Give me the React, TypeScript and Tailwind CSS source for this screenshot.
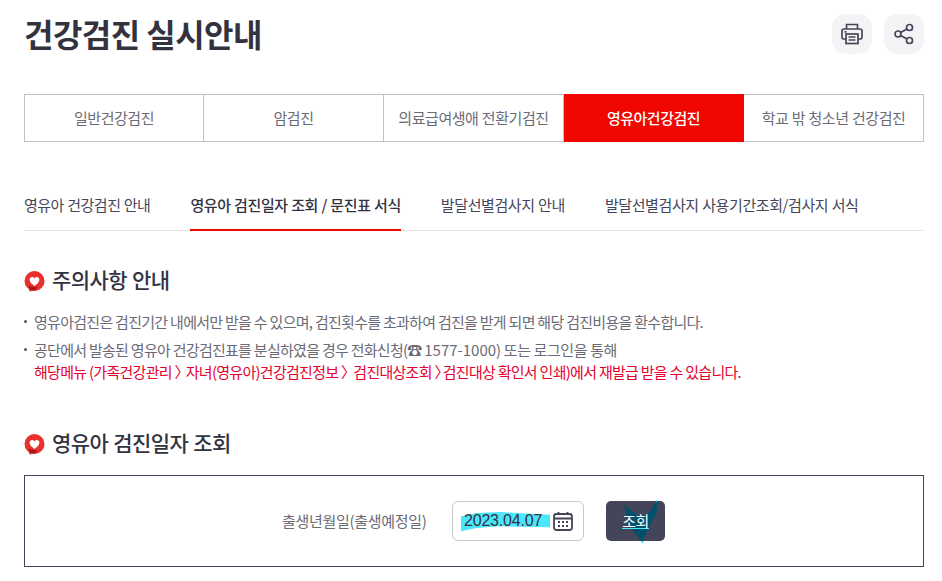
const FONT = "font-['Noto_Sans_CJK_KR','Noto_Sans',sans-serif]"

const tabs = ['일반건강검진', '암검진', '의료급여생애 전환기검진', '영유아건강검진', '학교 밖 청소년 건강검진']
const subTabs = ['영유아 건강검진 안내', '영유아 검진일자 조회 / 문진표 서식', '발달선별검사지 안내', '발달선별검사지 사용기간조회/검사지 서식']

function HeartIcon() {
  return (
    <svg width="21" height="21" viewBox="0 0 21 21" className="mt-[5px] shrink-0">
      <circle cx="10.5" cy="10" r="10" fill="#e8302c" />
      <path d="M4 14l1.500 6.500 8-1.500z" fill="#e8302c" />
      <path d="M4.500 14.500c2.500 1.200 5 1.800 8.500 1.500l-1 2.400c-2 .6-4 .7-6.200.4z" fill="#a31a1c" />
      <path d="M10.500 15C8.200 13.200 5.600 11.400 5.600 8.800 5.600 7.100 6.800 6 8.100 6c1 0 1.900.6 2.400 1.400C11 6.600 11.900 6 12.900 6c1.300 0 2.500 1.100 2.500 2.800 0 2.600-2.600 4.400-4.900 6.200z" fill="#fff" />
    </svg>
  )
}

function SectionTitle({ children }: { children: string }) {
  return (
    <div className="flex items-center gap-[7px] h-[30px]">
      <HeartIcon />
      <h2 className="text-[21px] font-medium leading-[30px] tracking-[-0.6px] [word-spacing:1px] text-[#33333f]">{children}</h2>
    </div>
  )
}

export default function App() {
  return (
    <div className={`${FONT} w-[942px] h-[581px] overflow-hidden bg-white pl-[24px] pr-[18px] tracking-[-0.5px]`}>
      <div className="flex items-start justify-between pt-[14px] h-[94px]">
        <h1 className="-mt-[2px] text-[32px] font-bold leading-[42px] tracking-[-0.55px] text-[#33333f]">건강검진 실시안내</h1>
        <div className="flex gap-[12px]">
          <button className="flex h-[40px] w-[40px] items-center justify-center rounded-[14px] bg-[#f4f4f6]">
            <svg width="24" height="24" viewBox="0 0 24 24" fill="none" stroke="#454559" strokeWidth="1.7">
              <path d="M6.500 7V2.500h11V7" />
              <path d="M6 17H3.500a1.500 1.500 0 0 1-1.500-1.500V9a2 2 0 0 1 2-2h16a2 2 0 0 1 2 2v6.500a1.500 1.500 0 0 1-1.500 1.500H18" />
              <rect x="6" y="12" width="12" height="9.500" />
              <path d="M8.500 15h7M8.500 18h7M4.500 9.800h2" />
            </svg>
          </button>
          <button className="flex h-[40px] w-[40px] items-center justify-center rounded-[14px] bg-[#f4f4f6]">
            <svg width="22" height="22" viewBox="0 0 22 22" fill="none" stroke="#454559" strokeWidth="1.700">
              <circle cx="5" cy="11" r="3" />
              <circle cx="16.500" cy="4.500" r="3" />
              <circle cx="16.500" cy="17.500" r="3" />
              <path d="M7.700 9.500l6.200-3.500M7.700 12.500l6.200 3.500" />
            </svg>
          </button>
        </div>
      </div>

      <div className="grid h-[48px] grid-cols-[179px_180px_180px_180px_179px] border border-[#c1c1c9]">
        {tabs.map((t, i) =>
          i === 3 ? (
            <div key={t} className="-my-px flex items-center justify-center bg-[#f00800] pr-[1px] text-[15px] font-medium text-white">{t}</div>
          ) : (
            <div key={t} className={`flex items-center justify-center whitespace-nowrap text-[15px] tracking-[-0.45px] [word-spacing:0.5px] text-[#6b6b76] ${i < 3 ? 'border-r border-[#c1c1c9]' : ''}`}>{t}</div>
          )
        )}
      </div>

      <div className="mt-[38px] flex h-[51px] gap-[40px] border-b border-[#e5e5e8]">
        {subTabs.map((t, i) => (
          <div key={t} className={`h-[51px] whitespace-nowrap pt-[13px] text-[15px] leading-[24px] [word-spacing:0.5px] ${i === 0 ? 'tracking-[-0.5px]' : 'tracking-[-0.4px]'} ${i === 1 ? 'border-b-2 border-[#f00800] font-medium text-[#33333f]' : 'text-[#454559]'}`}>{t}</div>
        ))}
      </div>

      <div className="mt-[33px]">
        <SectionTitle>주의사항 안내</SectionTitle>
      </div>

      <ul className="mt-[14px] text-[15px] leading-[28px] tracking-[-0.72px] text-[#6b6b76]">
        <li className="relative pl-[10px] whitespace-nowrap">
          <span className="absolute left-0 top-[12px] h-[3px] w-[3px] rounded-full bg-[#555]" />
          영유아검진은 검진기간 내에서만 받을 수 있으며, 검진횟수를 초과하여 검진을 받게 되면 해당 검진비용을 환수합니다.
        </li>
        <li className="relative pl-[10px] whitespace-nowrap">
          <span className="absolute left-0 top-[12px] h-[3px] w-[3px] rounded-full bg-[#555]" />
          공단에서 발송된 영유아 건강검진표를 분실하였을 경우 전화신청(☎ <span className="tracking-normal">1577-1000)</span> <span className="tracking-[-0.4px]">또는 로그인을 통해</span>
          <div className="-mt-[6px] text-[#e6002d]">
            해당메뉴 (가족건강관리 <span className="tracking-[-3.7px]">〉</span>자녀(영유아)건강검진정보 <span className="tracking-[-2.7px]">〉</span>검진대상조회 <span className="tracking-[-6.7px]">〉</span>검진대상 확인서 인쇄)에서 재발급 받을 수 있습니다.
          </div>
        </li>
      </ul>

      <div className="mt-[41px]">
        <SectionTitle>영유아 검진일자 조회</SectionTitle>
      </div>

      <div className="mt-[18px] flex h-[92px] items-center justify-center border border-[#454559]">
        <span className="mr-[25px] w-[145px] whitespace-nowrap text-[15px] tracking-[-0.3px] text-[#6b6b76]">출생년월일(출생예정일)</span>
        <div className="relative mr-[22px] flex h-[40px] w-[132px] items-center rounded-[6px] border border-[#c8c8c8] pl-[11px]">
          <svg width="90" height="20" viewBox="0 0 90 20" className="absolute left-[8px] top-[10px]">
            <path d="M0 4.300L15.700 1 39 0 89 2.700V15.300L39 14.300 15.700 16 0 19.300z" fill="#4ce6fb" />
          </svg>
          <span className="relative font-['Liberation_Sans',sans-serif] text-[16px] tracking-[-0.2px] text-[#33333f]">2023.04.07</span>
          <svg width="20" height="20" viewBox="0 0 20 20" className="absolute right-[10px] top-[9px]" fill="none" stroke="#454559" strokeWidth="1.800">
            <rect x="1" y="3" width="18" height="16" rx="2.500" />
            <path d="M1 7.500h18M5.500 1v3M14.500 1v3" />
            <path d="M5 11h2M9 11h2M13 11h2M5 15h2M9 15h2M13 15h2" strokeWidth="2" />
          </svg>
        </div>
        <button className="relative mr-[1px] h-[40px] w-[59px] rounded-[5px] bg-[#454559] text-[15px] tracking-[-0.5px] text-white">
          <svg width="59" height="44" viewBox="0 0 59 44" className="absolute left-0 -top-[1px]">
            <path d="M18 5L31 15H41L51 0V12L43 27 36 42 22 24z" fill="#01506c" />
            <path d="M50 1L51 0V3z M35.500 41h2L36.500 44z" fill="#25d5ee" />
          </svg>
          <span className="relative -mt-[2px] inline-block border-b border-[#4ce6fb] leading-[15px]">조회</span>
        </button>
      </div>
    </div>
  )
}
